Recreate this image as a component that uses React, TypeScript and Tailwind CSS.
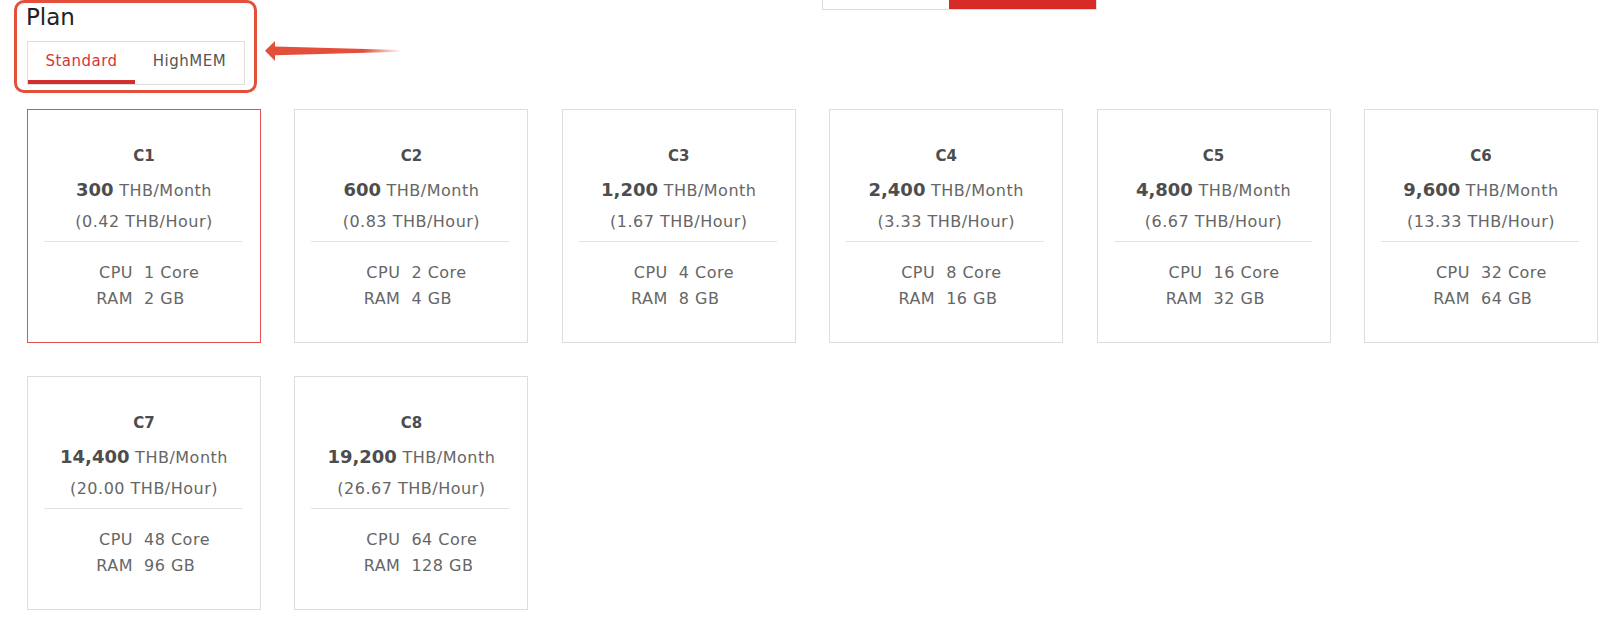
import React, { useState } from 'react';

interface Plan {
  name: string;
  price: string;
  hourly: string;
  cpu: string;
  ram: string;
}

const standardPlans: Plan[] = [
  { name: 'C1', price: '300', hourly: '0.42', cpu: '1 Core', ram: '2 GB' },
  { name: 'C2', price: '600', hourly: '0.83', cpu: '2 Core', ram: '4 GB' },
  { name: 'C3', price: '1,200', hourly: '1.67', cpu: '4 Core', ram: '8 GB' },
  { name: 'C4', price: '2,400', hourly: '3.33', cpu: '8 Core', ram: '16 GB' },
  { name: 'C5', price: '4,800', hourly: '6.67', cpu: '16 Core', ram: '32 GB' },
  { name: 'C6', price: '9,600', hourly: '13.33', cpu: '32 Core', ram: '64 GB' },
  { name: 'C7', price: '14,400', hourly: '20.00', cpu: '48 Core', ram: '96 GB' },
  { name: 'C8', price: '19,200', hourly: '26.67', cpu: '64 Core', ram: '128 GB' },
];

const font = { fontFamily: '"DejaVu Sans", "Liberation Sans", sans-serif' };

function Arrow() {
  return (
    <svg width="140" height="22" viewBox="0 0 140 22" className="mt-[40px] ml-[8px] shrink-0">
      <defs>
        <linearGradient id="fade" x1="0" x2="1" y1="0" y2="0">
          <stop offset="0" stopColor="#e34f3a" />
          <stop offset="0.72" stopColor="#e34f3a" />
          <stop offset="1" stopColor="#e34f3a" stopOpacity="0" />
        </linearGradient>
      </defs>
      <polygon
        points="0,10.8 10,1 10,6.6 137,10.1 137,11.7 10,15.2 10,21"
        fill="url(#fade)"
      />
    </svg>
  );
}

function PlanCard({ plan, selected, onSelect }: { plan: Plan; selected: boolean; onSelect: () => void }) {
  return (
    <div
      onClick={onSelect}
      className={`w-[234px] h-[234px] border bg-white cursor-pointer flex flex-col items-center ${
        selected ? 'border-[#e05252]' : 'border-[#dddddd]'
      }`}
    >
      <div className="mt-[36px] leading-[20px] text-[15px] font-bold text-[#4d4d4d]">{plan.name}</div>
      <div className="mt-[10px] leading-[28px] text-[#666] tracking-[0.5px]">
        <span className="text-[18px] font-bold text-[#4d4d4d] tracking-normal">{plan.price}</span>{' '}
        <span className="text-[16px]">THB/Month</span>
      </div>
      <div className="mt-[6px] leading-[22px] text-[16px] text-[#666] tracking-[0.5px]">
        ({plan.hourly} THB/Hour)
      </div>
      <div className="mt-[8px] h-px w-[198px] -translate-x-px bg-[#e3e3e3]" />
      <div className="mt-[18px] w-full text-[16px] text-[#666] tracking-[0.5px] leading-[26px]">
        <div className="flex">
          <span className="w-[105px] text-right">CPU</span>
          <span className="ml-[11px]">{plan.cpu}</span>
        </div>
        <div className="flex">
          <span className="w-[105px] text-right">RAM</span>
          <span className="ml-[11px]">{plan.ram}</span>
        </div>
      </div>
    </div>
  );
}

export default function App() {
  const [tab, setTab] = useState<'standard' | 'highmem'>('standard');
  const [selected, setSelected] = useState('C1');

  return (
    <div className="min-h-screen bg-white" style={font}>
      {/* Header */}
      <div className="flex items-start">
        <div className="ml-[14px] w-[243px] h-[93px] border-[3px] border-[#e2503c] rounded-[10px] pl-[10px] shrink-0">
          <div className="text-[23px] leading-[28px] text-[#222] -ml-px">Plan</div>
          <div className="mt-[10px] flex w-[218px] h-[44px] border border-[#dddddd]">
            <button
              onClick={() => setTab('standard')}
              className={`w-[107px] flex items-center justify-center text-[15px] tracking-[0.5px] border-b-4 ${
                tab === 'standard' ? 'text-[#d8343a] border-[#d32f2f]' : 'text-[#555] border-transparent'
              }`}
            >
              Standard
            </button>
            <button
              onClick={() => setTab('highmem')}
              className={`flex-1 flex items-center justify-center text-[15px] tracking-[0.5px] border-b-4 ${
                tab === 'highmem' ? 'text-[#d8343a] border-[#d32f2f]' : 'text-[#555] border-transparent'
              }`}
            >
              HighMEM
            </button>
          </div>
        </div>
        <Arrow />
        <div className="ml-[417px] flex h-[10px] w-[275px] border border-t-0 border-[#dddddd]">
          <div className="w-[126px] bg-white" />
          <div className="flex-1 bg-[#d62b27]" />
        </div>
      </div>

      {/* Cards */}
      <div className="mt-[16px] ml-[27px] grid grid-cols-[repeat(6,234px)] gap-x-[33.4px] gap-y-[33px]">
        {standardPlans.map((p) => (
          <PlanCard key={p.name} plan={p} selected={selected === p.name} onSelect={() => setSelected(p.name)} />
        ))}
      </div>
    </div>
  );
}
